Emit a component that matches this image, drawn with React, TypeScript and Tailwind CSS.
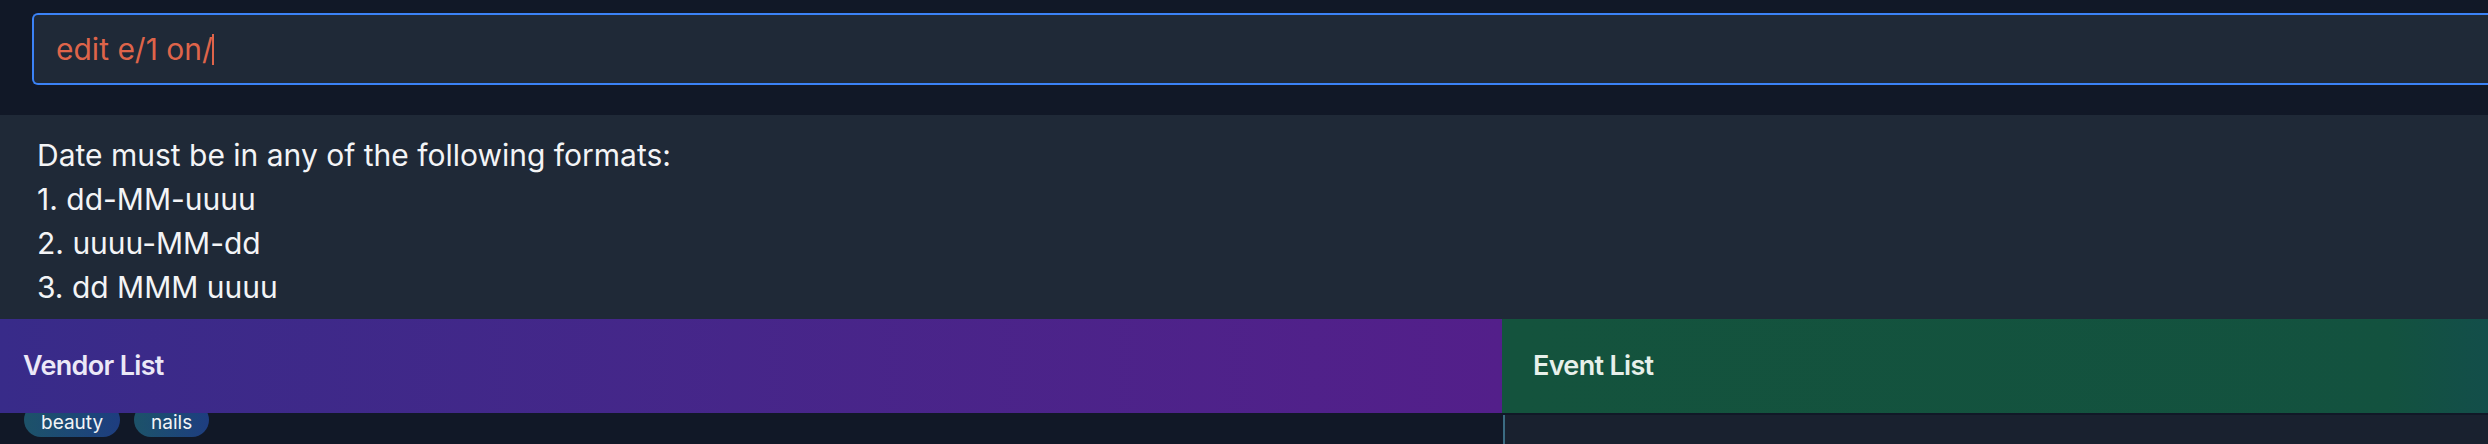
export default function App() {
  const formats = ['1. dd-MM-uuuu', '2. uuuu-MM-dd', '3. dd MMM uuuu'];
  const tags = ['beauty', 'nails'];

  return (
    <div className="h-[444px] w-full overflow-hidden bg-[#111827] flex flex-col font-['Inter',sans-serif]">
      {/* command box */}
      <div className="h-[115px] shrink-0 pt-[13px] pl-8">
        <div className="h-[72px] flex items-center border-2 border-r-0 border-[#3b82f6] rounded-l-md bg-[#1f2937] pl-[22px]">
          <span className="text-[30px] leading-none text-[#de644a]">edit e/1 on/</span>
          <span className="w-[2px] h-[31px] bg-[#de644a] -ml-[1px]" />
        </div>
      </div>

      {/* result display */}
      <div className="h-[204px] shrink-0 bg-[#1f2937] pl-[37px] pt-[18px] text-[30px] leading-[44px] text-gray-100">
        <p>Date must be in any of the following formats:</p>
        {formats.map((f) => (
          <p key={f}>{f}</p>
        ))}
      </div>

      {/* panels */}
      <div className="flex flex-1 min-h-0">
        <div className="w-[1502px] shrink-0 flex flex-col">
          <div className="h-[94px] shrink-0 flex items-center pl-[23px] bg-gradient-to-r from-[#382b89] to-[#531f8a]">
            <h2 className="text-[27px] font-semibold tracking-tight text-[#ebe8f7]">Vendor List</h2>
          </div>
          <div className="h-[24px] overflow-hidden flex items-end gap-[14px] pl-6">
            {tags.map((t) => (
              <span
                key={t}
                className="shrink-0 rounded-full bg-gradient-to-r from-[#1d5269] to-[#1e3d80] px-[17px] pt-2 pb-[2px] text-[19px] leading-[24px] text-gray-100"
              >
                {t}
              </span>
            ))}
          </div>
        </div>

        <div className="flex-1 flex flex-col">
          <div className="h-[94px] shrink-0 flex items-center pl-[31px] bg-gradient-to-r from-[#14533d] via-[#13523f] via-90% to-[#134e4a]">
            <h2 className="text-[27px] font-semibold tracking-tight text-[#e7f0ea]">Event List</h2>
          </div>
          <div className="mt-[2px] flex-1 bg-[#19212f] border-l-2 border-[#3b6b82] ml-px" />
        </div>
      </div>
    </div>
  );
}
